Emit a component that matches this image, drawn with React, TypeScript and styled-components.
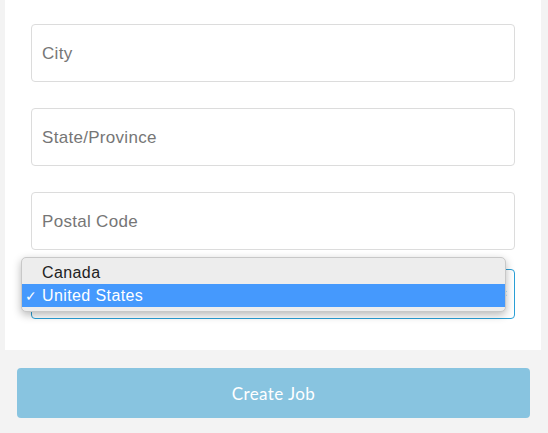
import React from "react";
import styled, { createGlobalStyle } from "styled-components";

const Global = createGlobalStyle`
  html, body { margin: 0; padding: 0; background: #f3f3f3; }
  body { font-family: "Liberation Sans", Arial, sans-serif; }
  * { box-sizing: border-box; }
`;

const Page = styled.div`
  width: 548px;
  height: 433px;
  overflow: hidden;
  background: #f3f3f3;
`;

const Card = styled.div`
  margin: 0 7px 0 5px;
  background: #ffffff;
  padding: 24px 26px 31px;
  display: flex;
  flex-direction: column;
  gap: 26px;
`;

const Field = styled.div`
  height: 58px;
  border: 1px solid #dcdcdc;
  border-radius: 4px;
  display: flex;
  align-items: center;
  padding: 2px 10px 0;
  font-size: 17px;
  color: #767676;
  letter-spacing: 0.3px;
`;

const SelectWrap = styled.div`
  position: relative;
  margin-top: -7px;
`;

const Select = styled.div`
  height: 50px;
  border: 1px solid #2a9fd6;
  border-radius: 4px;
  display: flex;
  align-items: center;
  justify-content: flex-end;
  padding: 0 6px 0 10px;
`;

const Arrows = styled.span`
  font-size: 10px;
  line-height: 1;
  color: #555;
`;

const Menu = styled.div`
  position: absolute;
  left: -10px;
  top: -12px;
  width: 485px;
  padding: 3px 0 4px;
  background: #ededed;
  border: 1px solid #c8c8c8;
  border-radius: 5px;
  box-shadow: 0 3px 8px rgba(0, 0, 0, 0.28);
  font-size: 16px;
  letter-spacing: 0.4px;
  color: #222;
`;

const Option = styled.div<{ $selected?: boolean }>`
  height: 23px;
  display: flex;
  align-items: center;
  padding-left: 3px;
  background: ${(p) => (p.$selected ? "#4599fd" : "transparent")};
  color: ${(p) => (p.$selected ? "#ffffff" : "#222")};
`;

const Check = styled.span`
  width: 17px;
  display: inline-block;
  font-size: 14px;
`;

const Footer = styled.div`
  padding: 18px 18px 0 17px;
`;

const Button = styled.button`
  width: 100%;
  height: 50px;
  border: none;
  border-radius: 4px;
  background: #88c4e0;
  color: #ffffff;
  font-family: Lato, "Liberation Sans", sans-serif;
  font-size: 17px;
  letter-spacing: 0.4px;
  padding: 0;
`;

export default function App() {
  return (
    <Page>
      <Global />
      <Card>
        <Field>City</Field>
        <Field>State/Province</Field>
        <Field>Postal Code</Field>
        <SelectWrap>
          <Select>
            <Arrows>⇕</Arrows>
          </Select>
          <Menu>
            <Option>
              <Check></Check>Canada
            </Option>
            <Option $selected>
              <Check>✓</Check>United States
            </Option>
          </Menu>
        </SelectWrap>
      </Card>
      <Footer>
        <Button>Create Job</Button>
      </Footer>
    </Page>
  );
}
